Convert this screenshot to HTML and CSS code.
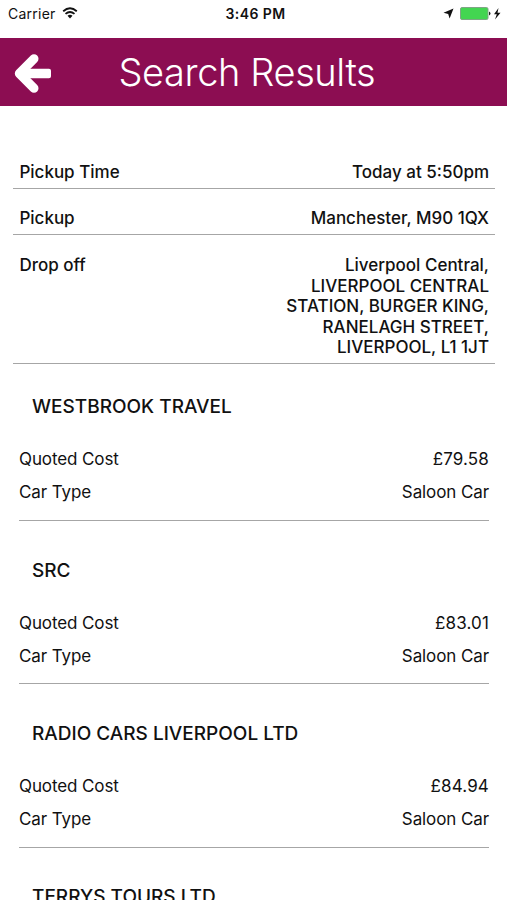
FILE: index.html
```html
<!DOCTYPE html>
<html lang="en">
<head>
<meta charset="utf-8">
<title>Search Results</title>
<link rel="stylesheet" href="styles.css">
</head>
<body>
<div class="status">
  <div class="left"><span>Carrier</span>
    <svg class="wifi" viewBox="0 0 16 12" width="16" height="12"><path d="M1.200 4.200Q8-1.600 14.800 4.200M3.500 6.900Q8 3 12.500 6.900" fill="none" stroke="#111" stroke-width="1.800"/><path d="M5.500 8.800Q8 6.600 10.500 8.800L8 11.500Z" fill="#111"/></svg>
  </div>
  <div class="time">3:46 PM</div>
  <div class="right">
    <svg class="loc" viewBox="0 0 11 11" width="11" height="11"><path d="M10.500.5 6.600 10.500 5.200 5.900.5 4.700Z" fill="#111"/></svg>
    <svg class="batt" viewBox="0 0 42 14" width="42" height="14"><rect x=".5" y=".5" width="27.500" height="12" rx="1.500" fill="#43d551" stroke="#7fa585"/><path d="M29 4.500q3.200 2 0 4Z" fill="#222"/><path d="M38.500 1 34 7.300h2.800L35 12.500 40.500 5.800H37.500Z" fill="#111"/></svg>
  </div>
</div>
<header class="bar">
  <svg class="back" viewBox="0 0 38 40" width="38" height="40"><path d="M20 6.800 5.300 21.500 20 36.200" fill="none" stroke="#fff" stroke-width="9" stroke-linecap="round" stroke-linejoin="round"/><path d="M5 21.500 16 12V31ZM12 16.700h23q2 0 2 2v5.600q0 2-2 2H12Z" fill="#fff"/></svg>
  <h1>Search Results</h1>
</header>
<main>
  <dl class="trip">
    <div class="field"><dt>Pickup Time</dt><dd>Today at 5:50pm</dd></div>
    <div class="field"><dt>Pickup</dt><dd>Manchester, M90 1QX</dd></div>
    <div class="field"><dt>Drop off</dt><dd>Liverpool Central,<br>LIVERPOOL CENTRAL<br>STATION, BURGER KING,<br>RANELAGH STREET,<br>LIVERPOOL, L1 1JT</dd></div>
  </dl>
  <section class="quote"><h2>WESTBROOK TRAVEL</h2>
    <div class="row"><span>Quoted Cost</span><span class="price">£79.58</span></div>
    <div class="row"><span>Car Type</span><span>Saloon Car</span></div></section>
  <section class="quote"><h2>SRC</h2>
    <div class="row"><span>Quoted Cost</span><span class="price">£83.01</span></div>
    <div class="row"><span>Car Type</span><span>Saloon Car</span></div></section>
  <section class="quote"><h2>RADIO CARS LIVERPOOL LTD</h2>
    <div class="row"><span>Quoted Cost</span><span class="price">£84.94</span></div>
    <div class="row"><span>Car Type</span><span>Saloon Car</span></div></section>
  <section class="quote"><h2>TERRYS TOURS LTD</h2></section>
</main>
</body>
</html>
```
FILE: styles.css
```css
* { box-sizing: border-box; margin: 0; padding: 0; }
body { height: 900px; overflow: hidden; background: #fff; color: #111; font-family: Inter, "Liberation Sans", sans-serif; font-size: 17px; }
.status { height: 38px; padding: 4px 5px 0 8px; display: grid; grid-template-columns: 1fr auto 1fr; font-size: 14px; line-height: 20px; }
.left { display: flex; gap: 6px; letter-spacing: 0.25px; }
.wifi { margin-top: 3px; }
.time { font-weight: 600; letter-spacing: 0.4px; margin-left: 1px; }
.right { display: flex; justify-content: flex-end; gap: 6px; }
.loc { margin-top: 4px; }
.batt { margin-top: 3px; }
.bar { height: 68px; background: #8c0d52; display: flex; align-items: center; padding-left: 14px; color: #fff; }
.back { overflow: visible; }
h1 { font-size: 38px; font-weight: 350; line-height: 46px; letter-spacing: -0.4px; margin-left: 66.5px; white-space: nowrap; }
.trip { padding: 36px 12px 0 13px; }
.field { display: flex; justify-content: space-between; padding: 20px 6px 5px 6.4px; border-bottom: 1px solid #a6a6a6; font-weight: 500; line-height: 20.5px; }
.field:nth-child(2) { padding: 19.4px 6px 5.8px 6.4px; }
dd { text-align: right; }
.quote { height: 157.4px; margin: 0 18px 0 19px; border-bottom: 1px solid #a6a6a6; }
.quote + .quote { margin-top: 6px; }
h2 { font-size: 19px; font-weight: 500; line-height: 24px; padding: 31px 0 28px 13px; }
.quote + .quote h2 { padding-top: 31.5px; }
.row { display: flex; justify-content: space-between; height: 33px; line-height: 24px; letter-spacing: -0.1px; }
.price { letter-spacing: 0.15px; }
```
